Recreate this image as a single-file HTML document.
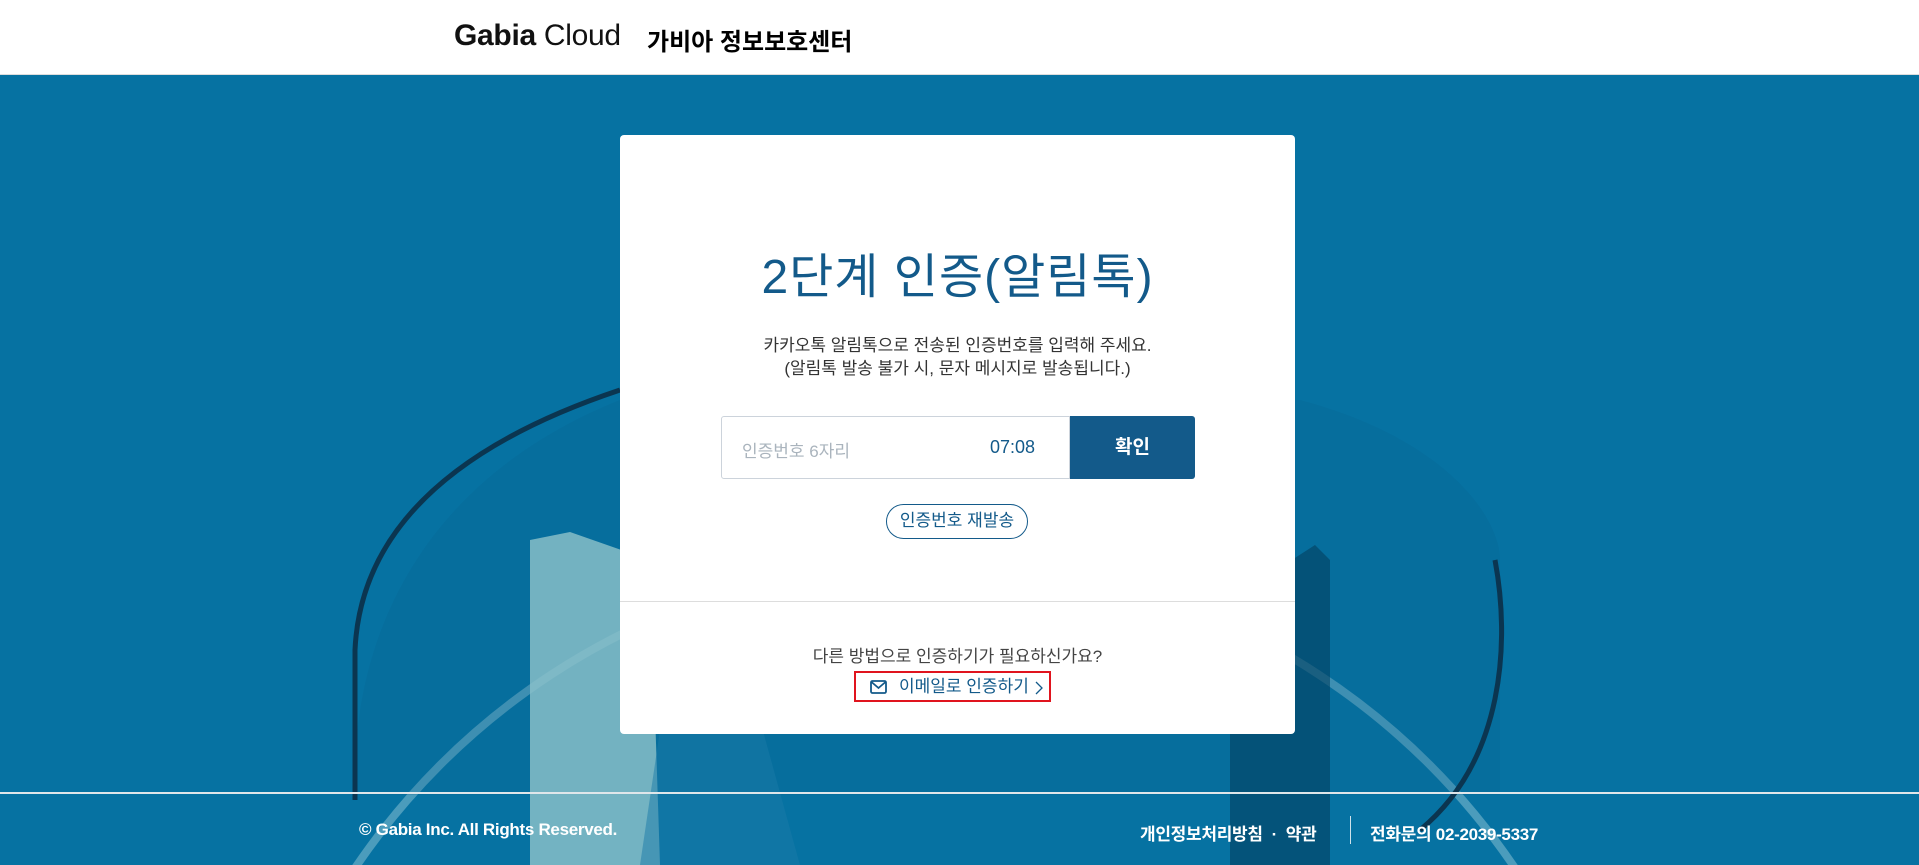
<!DOCTYPE html>
<html><head><meta charset="utf-8"><style>
*{margin:0;padding:0;box-sizing:border-box}
html,body{width:1919px;height:865px;overflow:hidden}
body{font-family:"Liberation Sans","Noto Sans CJK KR",sans-serif;background:#0672a2;position:relative}
.hdr{position:absolute;left:0;top:0;width:1919px;height:75px;background:#fff;border-bottom:1px solid #ddd}
.logo{position:absolute;left:454px;top:19px;font-size:30px;color:#111;letter-spacing:-0.3px}
.logo b{font-weight:700}
.hk{position:absolute;left:647px;top:22px;font-size:24px;font-weight:700;color:#000}
.bg{position:absolute;left:0;top:75px}
.card{position:absolute;left:620px;top:135px;width:675px;height:599px;background:#fff;border-radius:4px;text-align:center}
h1{position:absolute;top:102px;width:100%;font-size:48px;font-weight:400;color:#135a8a;letter-spacing:1px}
.desc{position:absolute;top:199px;width:100%;font-size:17px;line-height:23px;color:#333}
.inp{position:absolute;left:101px;top:281px;width:349px;height:63px;border:1px solid #ccd3db;border-radius:3px 0 0 3px}
.inp .ph{position:absolute;left:20px;top:20px;font-size:17px;color:#aab4bd}
.inp .t{position:absolute;right:34px;top:20px;font-size:18px;color:#135a8a}
.btn{position:absolute;left:450px;top:281px;width:125px;height:63px;background:#135a8a;color:#fff;font-size:19px;font-weight:700;line-height:63px;border-radius:0 3px 3px 0}
.pill{position:absolute;left:266px;top:369px;width:142px;height:35px;border:1.5px solid #135a8a;border-radius:18px;color:#135a8a;font-size:17px;line-height:32px}
.div{position:absolute;left:0;top:466px;width:100%;height:1px;background:#ddd}
.q{position:absolute;top:507px;width:100%;font-size:17px;color:#444}
.em{position:absolute;left:234px;top:536px;width:197px;height:31px;border:2px solid #e0141e;color:#135a8a;font-size:17px;line-height:27px;text-align:left;padding-left:14px;white-space:nowrap}
.em svg{vertical-align:-2px;margin-right:12px}
.fl{position:absolute;left:0;top:792px;width:1919px;height:2px;background:#dfe6ea}
.ft{position:absolute;top:820px;color:#fff;font-size:17px;font-weight:700;letter-spacing:-0.3px}
</style></head><body>
<div class="hdr"><div class="logo"><b>Gabia</b> Cloud</div><div class="hk">가비아 정보보호센터</div></div>
<svg class="bg" width="1919" height="790" viewBox="0 75 1919 790">
<rect x="0" y="75" width="1919" height="790" fill="#0672a2"/>
<circle cx="935" cy="1260" r="700" fill="none" stroke="#9fd0dc" stroke-width="8" opacity=".45"/>
<path d="M355 795 C350 640 420 480 620 400 L1300 400 C1450 440 1500 520 1500 560 L1500 795 Z" fill="#0a5e8c" opacity=".2"/>
<path d="M355 800 L355 650 C360 540 440 450 620 390" fill="none" stroke="#0b3550" stroke-width="5"/>
<path d="M1495 560 C1510 640 1505 760 1420 830" fill="none" stroke="#0b3550" stroke-width="5"/>
<path d="M530 540 L570 532 L650 560 L660 865 L530 865 Z" fill="#8fc3cb" opacity=".8"/>
<path d="M1315 545 L1330 560 L1330 865 L1230 865 L1230 600 Z" fill="#04405f" opacity=".6"/>
<path d="M660 730 L760 720 L800 865 L640 865 Z" fill="#1a7aa8" opacity=".5"/>
</svg>
<div class="card">
<h1>2단계 인증(알림톡)</h1>
<div class="desc">카카오톡 알림톡으로 전송된 인증번호를 입력해 주세요.<br>(알림톡 발송 불가 시, 문자 메시지로 발송됩니다.)</div>
<div class="inp"><span class="ph">인증번호 6자리</span><span class="t">07:08</span></div>
<div class="btn">확인</div>
<div class="pill">인증번호 재발송</div>
<div class="div"></div>
<div class="q">다른 방법으로 인증하기가 필요하신가요?</div>
<div class="em"><svg width="17" height="14" viewBox="0 0 17 14"><rect x="1" y="1" width="15" height="12" rx="1.5" fill="none" stroke="#135a8a" stroke-width="1.8"/><path d="M1.5 2 L8.5 8 L15.5 2" fill="none" stroke="#135a8a" stroke-width="1.8"/></svg>이메일로 인증하기<svg style="position:absolute;right:6px;top:8px;margin:0" width="8" height="14" viewBox="0 0 8 14"><path d="M1 1 L7 7 L1 13" fill="none" stroke="#135a8a" stroke-width="1.3"/></svg></div>
</div>
<div class="fl"></div>
<div class="ft" style="left:359px">© Gabia Inc. All Rights Reserved.</div>
<div class="ft" style="left:1140px">개인정보처리방침 &nbsp;·&nbsp; 약관</div>
<div style="position:absolute;left:1350px;top:816px;width:1px;height:28px;background:#cfe2ea"></div>
<div class="ft" style="left:1370px">전화문의 02-2039-5337</div>
</body></html>
